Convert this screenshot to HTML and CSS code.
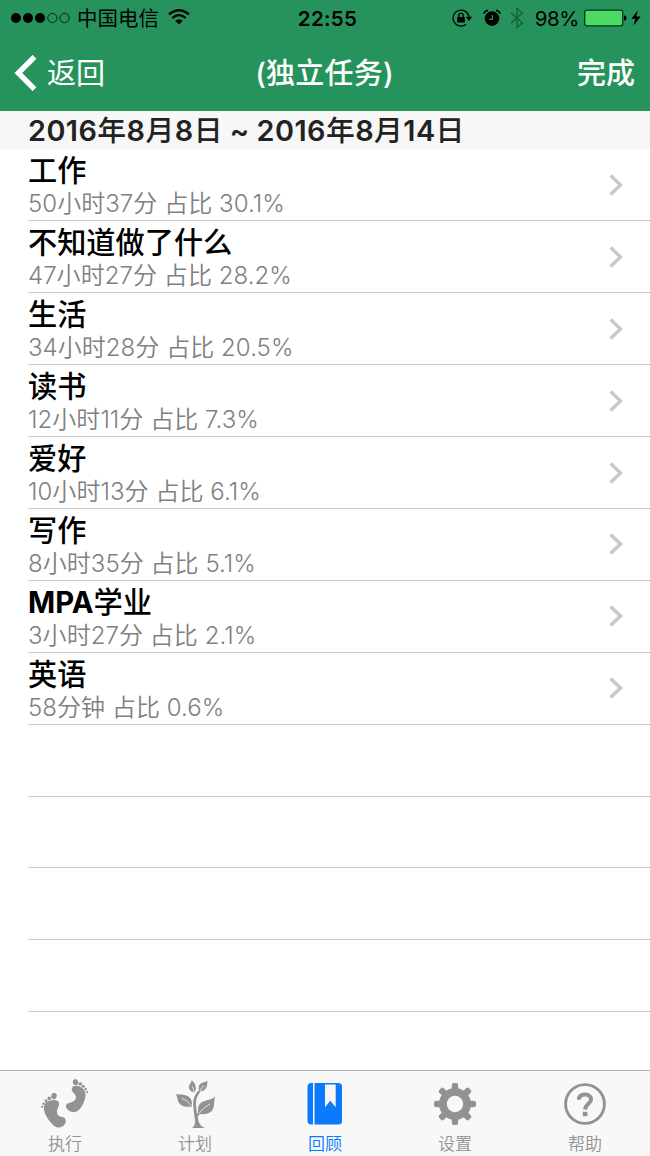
FILE: index.html
```html
<!DOCTYPE html>
<html lang="zh-CN">
<head>
    <meta charset="UTF-8">
    <meta name="viewport" content="width=device-width, initial-scale=1.0">
    <title>独立任务</title>
    <link rel="stylesheet" href="styles.css">
</head>
<body>
    <div class="screen">
        <header class="header">
            <div class="status-bar">
                <div class="status-left">
                    <svg class="signal" width="60" height="12" viewBox="0 0 60 12">
                        <g fill="#000">
                            <circle cx="5" cy="6" r="5"/>
                            <circle cx="17" cy="6" r="5"/>
                            <circle cx="29" cy="6" r="5"/>
                        </g>
                        <g fill="none" stroke="#031a0e" stroke-width="0.9">
                            <circle cx="41.4" cy="6" r="4.6"/>
                            <circle cx="53.6" cy="6" r="4.6"/>
                        </g>
                    </svg>
                    <span class="carrier">中国电信</span>
                    <svg class="wifi" width="22" height="16" viewBox="0 0 22 16">
                        <g fill="none" stroke="#000" stroke-width="2.3">
                            <path d="M1 5.4Q11-3 21 5.4"/>
                            <path d="M4.3 9Q11 3.2 17.7 9"/>
                        </g>
                        <path d="M7.2 11.8Q11 8.6 14.8 11.8L11 15.6Z"/>
                    </svg>
                </div>
                <span class="time">22:55</span>
                <div class="status-right">
                    <svg class="lock" width="21" height="18" viewBox="0 0 21 18">
                        <path d="M14.2 15.2A8 8 0 1 1 17 8.2" fill="none" stroke="#000" stroke-width="1.2"/>
                        <path d="M13.8 7.8h6.4L17 12Z"/>
                        <rect x="5.2" y="8" width="7.6" height="5.6" rx=".6"/>
                        <path d="M6.8 8.4V6.3a2.2 2.2 0 0 1 4.4 0v2.1" fill="none" stroke="#000" stroke-width="1.3"/>
                    </svg>
                    <svg class="alarm" width="18" height="18" viewBox="0 0 18 18">
                        <circle cx="9" cy="9.6" r="7.3"/>
                        <path d="M.8 4.6Q2 1.8 5 1.4M17.2 4.6Q16 1.8 13 1.4" fill="none" stroke="#000" stroke-width="1.6"/>
                        <path d="M9.4 6v4.4H6" fill="none" stroke="#27935c" stroke-width="1.3"/>
                    </svg>
                    <svg class="bluetooth" width="14" height="22" viewBox="0 0 14 22">
                        <path d="M1 5.8l11.4 10.2L7 20.6V1.4l5.4 4.6L1 16.2" fill="none" stroke="#16603b" stroke-width="1.4"/>
                    </svg>
                    <span class="percent">98%</span>
                    <svg class="battery" width="43" height="18" viewBox="0 0 43 18">
                        <rect x=".7" y="1.2" width="38" height="15.6" rx="2" fill="#4cd964" stroke="#08361c" stroke-width="1.3"/>
                        <path d="M40 6.2q2.6.6 2.6 2.8T40 11.8Z"/>
                    </svg>
                    <svg class="bolt" width="10" height="16" viewBox="0 0 10 16">
                        <path d="M6.8.4L.3 8.8h3.9L2.6 15.6 9.7 6.6H5.5Z"/>
                    </svg>
                </div>
            </div>
            <nav class="nav-bar">
                <a class="back">
                    <svg width="24" height="36" viewBox="0 0 24 36">
                        <path d="M20.500 1.800L4.300 18 20.500 34.200" fill="none" stroke="#fff" stroke-width="5.400"/>
                    </svg>
                    <span>返回</span>
                </a>
                <h1 class="nav-title">(独立任务)</h1>
                <a class="done">完成</a>
            </nav>
        </header>

        <h2 class="section-title"><b>2016</b>年<b>8</b>月<b>8</b>日 <b>~</b> <b>2016</b>年<b>8</b>月<b>14</b>日</h2>

        <ul class="task-list">
            <li class="task">
                <div><h3>工作</h3><p>50小时37分 占比 30.1%</p></div>
                <svg class="chevron" width="14" height="22" viewBox="0 0 14 22"><path d="M1.5 1.5L11.5 11 1.5 20.5"/></svg>
            </li>
            <li class="task">
                <div><h3>不知道做了什么</h3><p>47小时27分 占比 28.2%</p></div>
                <svg class="chevron" width="14" height="22" viewBox="0 0 14 22"><path d="M1.5 1.5L11.5 11 1.5 20.5"/></svg>
            </li>
            <li class="task">
                <div><h3>生活</h3><p>34小时28分 占比 20.5%</p></div>
                <svg class="chevron" width="14" height="22" viewBox="0 0 14 22"><path d="M1.5 1.5L11.5 11 1.5 20.5"/></svg>
            </li>
            <li class="task">
                <div><h3>读书</h3><p>12小时11分 占比 7.3%</p></div>
                <svg class="chevron" width="14" height="22" viewBox="0 0 14 22"><path d="M1.5 1.5L11.5 11 1.5 20.5"/></svg>
            </li>
            <li class="task">
                <div><h3>爱好</h3><p>10小时13分 占比 6.1%</p></div>
                <svg class="chevron" width="14" height="22" viewBox="0 0 14 22"><path d="M1.5 1.5L11.5 11 1.5 20.5"/></svg>
            </li>
            <li class="task">
                <div><h3>写作</h3><p>8小时35分 占比 5.1%</p></div>
                <svg class="chevron" width="14" height="22" viewBox="0 0 14 22"><path d="M1.5 1.5L11.5 11 1.5 20.5"/></svg>
            </li>
            <li class="task">
                <div><h3><b>MPA</b>学业</h3><p>3小时27分 占比 2.1%</p></div>
                <svg class="chevron" width="14" height="22" viewBox="0 0 14 22"><path d="M1.5 1.5L11.5 11 1.5 20.5"/></svg>
            </li>
            <li class="task">
                <div><h3>英语</h3><p>58分钟 占比 0.6%</p></div>
                <svg class="chevron" width="14" height="22" viewBox="0 0 14 22"><path d="M1.5 1.5L11.5 11 1.5 20.5"/></svg>
            </li>
            <li class="task"></li>
            <li class="task"></li>
            <li class="task"></li>
            <li class="task"></li>
        </ul>

        <nav class="tab-bar">
            <a class="tab">
                <svg width="50" height="52" viewBox="0 0 50 52">
                    <!-- left foot -->
                    <path d="M6 23.500C9 20.800 15 20 18.300 22.500C20.500 25 17.500 28.500 17 32C16.500 36 19 37.500 22.500 38C26 39 26.500 42 25 45C23 48.500 18 49.500 15 47.500C11 44.500 5 37 4 31C3.600 28 4.300 25.500 6 23.500Z"/>
                    <ellipse cx="14" cy="17" rx="2.700" ry="3.100" transform="rotate(15 14 17)"/>
                    <circle cx="9.300" cy="19.400" r="1.800"/>
                    <circle cx="6" cy="21.800" r="1.500"/>
                    <circle cx="3.600" cy="24.700" r="1.300"/>
                    <circle cx="2.300" cy="27.800" r="1.100"/>
                    <!-- right foot -->
                    <path d="M33 7.500C37 5.500 42 8 44.500 11.500C46.500 15 45.500 20 43 25C41 29 38 33 34.500 33C30 33.500 25.500 30 26 26.500C26.500 24 30 24 33 22.500C36.500 20.500 37 17.500 34 14.500C31.500 12 31 9 33 7.500Z"/>
                    <ellipse cx="35.500" cy="3.200" rx="2.700" ry="3.100" transform="rotate(-12 35.500 3.200)"/>
                    <circle cx="40.300" cy="5" r="1.800"/>
                    <circle cx="43.300" cy="7.300" r="1.500"/>
                    <circle cx="45.600" cy="10.100" r="1.300"/>
                    <circle cx="47.200" cy="13.100" r="1.100"/>
                </svg>
                <span>执行</span>
            </a>
            <a class="tab">
                <svg width="50" height="52" viewBox="-5 0 50 52">
                    <!-- stem -->
                    <path d="M17 49C19.800 47 20.300 45 19.800 40C19.300 35 18.300 31 18.200 25C18.100 20 19.500 16 23.500 11.500L25.300 12.700C22 17 20.600 21 21 26C21.300 31 22.400 34 23 39C23.600 44 25.500 47.500 30 49Z"/>
                    <!-- leaves -->
                    <path d="M1 15.300C6 15.500 11.500 15.500 14.700 18.500C17 21 17.200 24.500 17 27.500C12 28.500 6.500 27.500 4 24C2.200 21.500 2.800 18 1 15.300Z"/>
                    <path d="M16.700 1.200C20 3.500 22.400 8.500 19.600 13.600C15 12.500 13 9.500 14.200 6.500C15 4.500 16.500 3 16.700 1.200Z"/>
                    <path d="M32.500 1.600C32.200 6 32.500 12 24.500 12.700C22.800 8 24 4.500 28 3.500C30 3 31.500 2.600 32.500 1.600Z"/>
                    <path d="M40 17.500C38.500 22.500 40.500 29.500 35.500 33C32 35.500 27 35.500 23.300 34.700C22.500 30 23 25 27.500 22.800C32 20.800 37 20.800 40 17.500Z"/>
                    <path d="M21.700 38.500Q22.500 35 26 33" fill="none" stroke="#929292" stroke-width="1.500"/>
                    <!-- leaf veins -->
                    <path d="M6.500 19Q13 21.500 16.600 27M17 7Q18.500 10 19.300 13M29 6.500Q26.500 9 25 12M35 25Q28 29 24.300 34" fill="none" stroke="#f8f8f8" stroke-width="0.800"/>
                </svg>
                <span>计划</span>
            </a>
            <a class="tab active">
                <svg width="50" height="52" viewBox="0 0 50 52">
                    <path d="M10.500 4H13V45.500H10.500Q7.500 45 7.500 42V7.500Q7.500 4.500 10.500 4Z"/>
                    <path fill-rule="evenodd" d="M14.500 4H38.500Q42 4 42 7.500V42Q42 45.500 38.500 45.500H14.500ZM25 5.500V28.200L30.300 21.800 35.700 28.200V5.500Z"/>
                </svg>
                <span>回顾</span>
            </a>
            <a class="tab">
                <svg width="50" height="52" viewBox="0 0 50 52">
                    <rect x="21.800" y="4" width="6.400" height="42" rx="2"/>
                    <rect x="21.800" y="4" width="6.400" height="42" rx="2" transform="rotate(45 25 25)"/>
                    <rect x="21.800" y="4" width="6.400" height="42" rx="2" transform="rotate(90 25 25)"/>
                    <rect x="21.800" y="4" width="6.400" height="42" rx="2" transform="rotate(135 25 25)"/>
                    <circle cx="25" cy="25" r="16"/>
                    <circle cx="25" cy="25" r="8.200" fill="#f8f8f8"/>
                </svg>
                <span>设置</span>
            </a>
            <a class="tab">
                <svg width="50" height="52" viewBox="0 0 50 52">
                    <circle cx="25" cy="25" r="19.400" fill="none" stroke="#929292" stroke-width="2.900"/>
                    <path d="M19 20.800C19 17 21.500 15.500 25 15.500C28.500 15.500 31 17.500 31 20.500C31 25 25.200 24.500 25.200 30.500" fill="none" stroke="#929292" stroke-width="4"/>
                    <rect x="22.800" y="32.800" width="4.600" height="4.400"/>
                </svg>
                <span>帮助</span>
            </a>
        </nav>
    </div>
</body>
</html>
```
FILE: styles.css
```css
:root {
    --green: #27935c;
    --blue: #0b7bfb;
    --gray: #929292;
    --line: #c8c7cc;
}

* {
    box-sizing: border-box;
}

body {
    margin: 0;
    background-color: #fff;
    font-family: Inter, "Noto Sans CJK SC", sans-serif;
    color: #000;
}

h1, h2, h3, p, ul {
    margin: 0;
    padding: 0;
    font-weight: 500;
}

svg {
    display: block;
    flex: none;
}

.screen {
    display: flex;
    flex-direction: column;
    width: 650px;
    height: 1156px;
    overflow: hidden;
}

.header {
    height: 111px;
    background-color: var(--green);
}

.status-bar {
    display: grid;
    grid-template-columns: 1fr auto 1fr;
    align-items: center;
    height: 35px;
    padding: 0 9px 0 11px;
    font-size: 20px;
    line-height: 35px;
}

.status-left,
.status-right {
    display: flex;
    align-items: center;
}

.status-right {
    justify-content: flex-end;
}

.carrier {
    margin-left: 6px;
    padding-top: 1px;
    font-size: 20.5px;
}

.wifi {
    margin-left: 9px;
    margin-top: -2px;
}

.time {
    padding-left: 3px;
    font-size: 20.5px;
    font-weight: 600;
    letter-spacing: 0.3px;
}

.alarm {
    margin-left: 10px;
}

.bluetooth {
    margin-left: 9px;
}

.percent {
    margin-left: 11px;
    font-size: 20.5px;
    letter-spacing: -0.4px;
}

.battery {
    margin-left: 5px;
}

.bolt {
    margin-left: 4px;
}

.nav-bar {
    display: grid;
    grid-template-columns: 1fr auto 1fr;
    align-items: center;
    height: 76px;
    padding: 0 15px 0 14px;
    color: #fff;
    font-size: 29px;
    line-height: 75px;
}

.back {
    display: flex;
    align-items: center;
}

.back span {
    margin-left: 9px;
    padding-top: 1px;
}

.nav-title {
    font-size: 29px;
    letter-spacing: 0.2px;
}

.done {
    padding-top: 1px;
    text-align: right;
    font-weight: 500;
}

.section-title {
    height: 38px;
    padding-left: 28px;
    background-color: #f7f7f7;
    color: #222;
    font-size: 28.8px;
    line-height: 40px;
    letter-spacing: 0.45px;
    word-spacing: -1.2px;
}

.section-title b {
    font-weight: 600;
}

.task-list {
    flex: 1;
    padding-top: 0.5px;
    list-style: none;
}

.task {
    display: flex;
    align-items: center;
    justify-content: space-between;
    height: 71.9px;
    margin-left: 28px;
    padding-right: 27px;
    border-bottom: 1px solid var(--line);
}

.task h3 {
    padding-top: 2px;
    font-size: 29.2px;
    line-height: 36px;
}

.task b {
    font-weight: 700;
}

.task p {
    color: #808080;
    font-size: 24px;
    font-weight: 350;
    line-height: 29px;
    letter-spacing: 0.05px;
}

.chevron {
    fill: none;
    stroke: #c7c7cc;
    stroke-width: 3.4;
}

.tab-bar {
    display: grid;
    grid-template-columns: repeat(5, 1fr);
    height: 86px;
    background-color: #f8f8f8;
    border-top: 1px solid #b2b2b2;
}

.tab {
    display: flex;
    flex-direction: column;
    align-items: center;
    padding-top: 8px;
    color: var(--gray);
    fill: var(--gray);
    font-size: 17px;
    font-weight: 350;
    line-height: 26px;
}

.active {
    color: var(--blue);
    fill: var(--blue);
}
```
